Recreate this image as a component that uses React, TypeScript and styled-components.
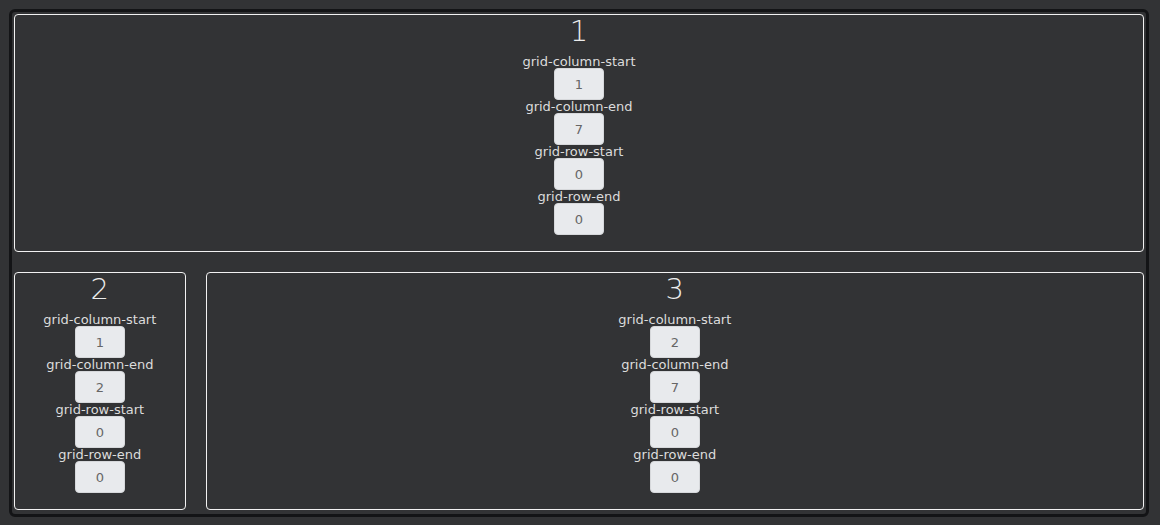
import React from "react";
import styled, { createGlobalStyle } from "styled-components";

const GlobalStyle = createGlobalStyle`
  html, body {
    margin: 0;
    padding: 0;
    background: #323335;
  }
  body {
    font-family: "DejaVu Sans", "Liberation Sans", sans-serif;
    color: #e6e6e6;
  }
  * { box-sizing: border-box; }
`;

const Page = styled.div`
  padding: 9px 11px 8px 9px;
  height: 525px;
`;

const Board = styled.div`
  height: 100%;
  border: 3px solid #131416;
  border-radius: 6px;
  padding: 2px 2px 4px 2px;
  display: grid;
  grid-template-columns: repeat(6, 1fr);
  grid-template-rows: 1fr 1fr;
  column-gap: 20px;
  row-gap: 20px;
`;

const Card = styled.div<{ $cs: number; $ce: number }>`
  grid-column: ${(p) => p.$cs} / ${(p) => p.$ce};
  border: 1px solid #f2f2f2;
  border-radius: 4px;
  display: flex;
  flex-direction: column;
  align-items: center;
  min-width: 0;
`;

const Title = styled.div`
  font-size: 29px;
  font-weight: 200;
  line-height: 32px;
  margin-bottom: 8px;
  color: #ececec;
`;

const Field = styled.div`
  display: flex;
  flex-direction: column;
  align-items: center;
`;

const Label = styled.div`
  font-size: 13px;
  line-height: 13px;
  color: #dcdcdc;
  white-space: nowrap;
`;

const ValueBox = styled.input`
  width: 50px;
  height: 32px;
  border: 1px solid #d6d8db;
  border-radius: 4px;
  background: #e8eaed;
  color: #666;
  font-family: "DejaVu Sans", "Liberation Sans", sans-serif;
  font-size: 13px;
  text-align: center;
  padding: 0;
  outline: none;
`;

type Item = { id: number; cs: number; ce: number; rs: number; re: number };

const items: Item[] = [
  { id: 1, cs: 1, ce: 7, rs: 0, re: 0 },
  { id: 2, cs: 1, ce: 2, rs: 0, re: 0 },
  { id: 3, cs: 2, ce: 7, rs: 0, re: 0 },
];

export default function App() {
  return (
    <>
      <GlobalStyle />
      <Page>
        <Board>
          {items.map((it) => (
            <Card key={it.id} $cs={it.cs} $ce={it.ce}>
              <Title>{it.id}</Title>
              {[
                ["grid-column-start", it.cs],
                ["grid-column-end", it.ce],
                ["grid-row-start", it.rs],
                ["grid-row-end", it.re],
              ].map(([label, v]) => (
                <Field key={label as string}>
                  <Label>{label}</Label>
                  <ValueBox readOnly value={String(v)} />
                </Field>
              ))}
            </Card>
          ))}
        </Board>
      </Page>
    </>
  );
}
